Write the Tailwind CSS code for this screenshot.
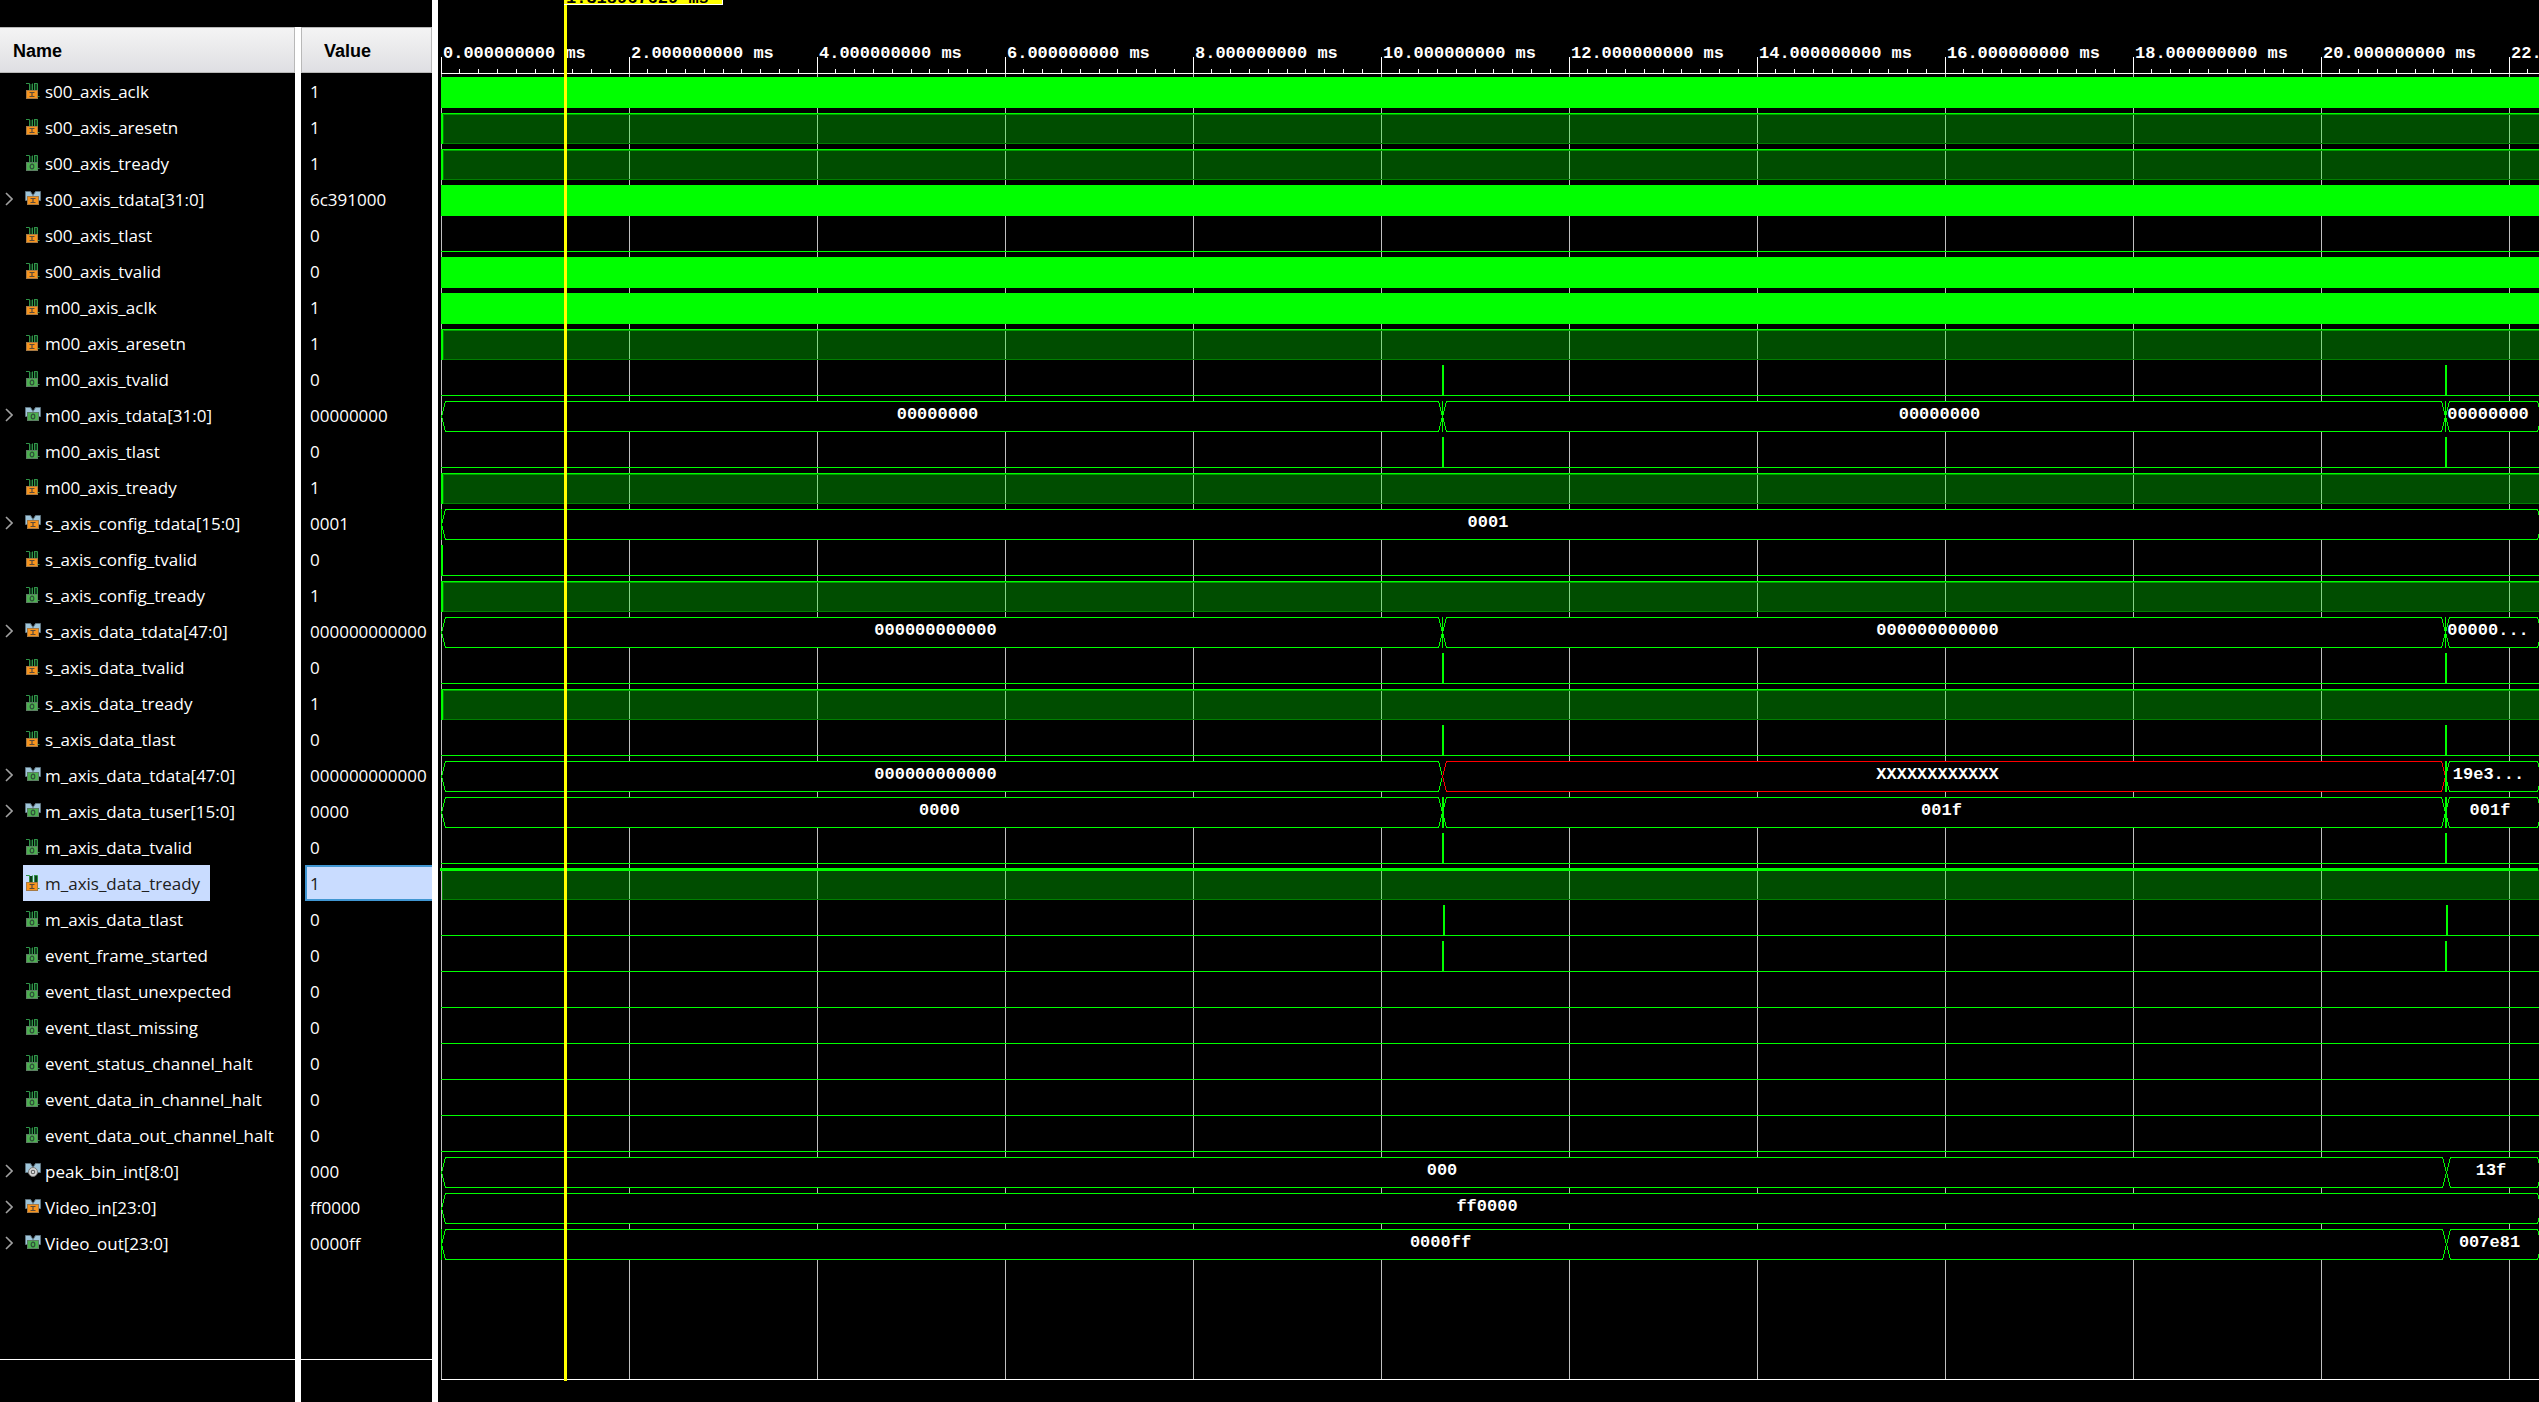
<!DOCTYPE html>
<html lang="en">
<head>
<meta charset="utf-8">
<title>Waveform viewer</title>
<script src="https://cdn.jsdelivr.net/npm/@tailwindcss/browser@4"></script>
</head>
<body class="bg-black text-white">

<svg class="hidden" aria-hidden="true">
  <defs>
    <symbol id="wave" viewBox="0 0 16 16">
      <path d="M4 1V8H8V1Z M9 1H13V13H9Z" fill="#0f3d1c"/>
      <path d="M1 .5H4.5V8M7.5 8V.5M9 .5H12.5V13.5H14.5M9.5 .5V8" fill="none" stroke="#2f9348"/>
    </symbol>
    <symbol id="bus" viewBox="0 0 16 16">
      <path d="M.5 .5H5.5L8 4.5L10.5 .5H15.5V9.5H.5Z" fill="#9fc5da" stroke="#5f7480"/>
    </symbol>
    <symbol id="badge-in" viewBox="0 0 12 9">
      <rect x=".5" y=".5" width="11" height="8" fill="#f7941d" stroke="#a67a45"/>
      <path d="M3.5 2.5H8.5M3.5 6.5H8.5M6 2.5V6.5" stroke="#5a4a3a" stroke-width="1.2" fill="none"/>
    </symbol>
    <symbol id="badge-out" viewBox="0 0 12 9">
      <rect x=".5" y=".5" width="11" height="8" fill="#4caf50" stroke="#5c7f63"/>
      <ellipse cx="6" cy="4.5" rx="1.8" ry="2.4" stroke="#30503a" stroke-width="1.2" fill="none"/>
    </symbol>
    <symbol id="badge-int" viewBox="0 0 12 12">
      <circle cx="6" cy="6" r="4.5" fill="#d4d4d4" stroke="#777"/>
      <circle cx="6" cy="6" r="1.7" fill="#f4f4f4" stroke="#666" stroke-width="1.2"/>
    </symbol>
  </defs>
</svg>

<main class="flex h-screen overflow-hidden">
  <!-- Signal names and values -->
  <section class="flex w-[438px] shrink-0 flex-col border-r-6 border-white pt-[27px]">
    <table class="w-full table-fixed border-separate border-spacing-0 font-['Open_Sans',sans-serif] text-[17px] leading-[34px]">
      <thead class="font-['Liberation_Sans',sans-serif] text-lg text-black">
        <tr>
          <th scope="col" class="w-[301px] border-r-6 border-white p-0 text-left font-bold">
            <div class="flex h-[46px] items-center border-y border-r border-[#b8b8b8] bg-linear-to-b from-[#f4f4f4] to-[#dfdfe3] pt-0.5 pl-[13px]">Name</div>
          </th>
          <th scope="col" class="p-0 text-left font-bold">
            <div class="flex h-[46px] items-center border border-[#b8b8b8] bg-linear-to-b from-[#f4f4f4] to-[#dfdfe3] pt-0.5 pl-[22px]">Value</div>
          </th>
        </tr>
      </thead>
      <tbody id="signals"></tbody>
    </table>
    <div class="flex min-h-0 flex-1">
      <div class="w-[301px] border-r-6 border-white"><div class="h-[99px] border-b border-white"></div></div>
      <div class="flex-1"><div class="h-[99px] border-b border-white"></div></div>
    </div>
  </section>

  <!-- Waveforms -->
  <section class="relative min-w-0 flex-1 overflow-hidden pl-[3px] font-['Liberation_Mono',monospace] text-[17px] leading-5 font-bold">
    <div class="relative h-[73px]">
      <div id="ruler" class="flex pt-11"></div>
      <svg id="ticks" class="absolute bottom-0 left-0 h-4 w-full overflow-hidden" fill="#fff" shape-rendering="crispEdges"></svg>
    </div>
    <div class="relative h-[1307px] border-y border-white">
      <svg id="grid" class="absolute inset-0 h-full w-full" fill="#c0c0c0" shape-rendering="crispEdges"></svg>
      <div id="waves" class="relative -mt-px"></div>
    </div>
    <div class="absolute top-0 left-[126px] h-[1381px] w-[3px] bg-[#ffff00]"></div>
    <div class="absolute top-0 left-[126px] h-[5px] w-[159px] overflow-hidden border-r border-b border-white bg-[#ffff00] pl-0.5 text-black"><div class="-mt-[11px]">1.318967629 ms</div></div>
  </section>
</main>

<script>
const END = 2100;          // right end of the simulated range, px from 0 ms
const A = 1001, B = 2004;  // frame events
const seg = (to, text, o = {}) => ({ to, text, ...o });

// [name, direction, value, wave, options]
const signals = [
  ['s00_axis_aclk', 'in', '1', 'busy'],
  ['s00_axis_aresetn', 'in', '1', 'high'],
  ['s00_axis_tready', 'out', '1', 'high'],
  ['s00_axis_tdata[31:0]', 'in', '6c391000', 'busy'],
  ['s00_axis_tlast', 'in', '0', 'low'],
  ['s00_axis_tvalid', 'in', '0', 'busy'],
  ['m00_axis_aclk', 'in', '1', 'busy'],
  ['m00_axis_aresetn', 'in', '1', 'high'],
  ['m00_axis_tvalid', 'out', '0', 'low', { spikes: [A, B] }],
  ['m00_axis_tdata[31:0]', 'out', '00000000', 'bus', { segs: [seg(A, '00000000', { bar: 1 }), seg(B, '00000000', { bar: 1 }), seg(END, '00000000')] }],
  ['m00_axis_tlast', 'out', '0', 'low', { spikes: [A, B] }],
  ['m00_axis_tready', 'in', '1', 'high'],
  ['s_axis_config_tdata[15:0]', 'in', '0001', 'bus', { start: 1, segs: [seg(END, '0001')] }],
  ['s_axis_config_tvalid', 'in', '0', 'low', { spikes: [0] }],
  ['s_axis_config_tready', 'out', '1', 'high'],
  ['s_axis_data_tdata[47:0]', 'in', '000000000000', 'bus', { segs: [seg(A, '000000000000', { bar: 1 }), seg(B, '000000000000', { bar: 1 }), seg(END, '00000...')] }],
  ['s_axis_data_tvalid', 'in', '0', 'low', { spikes: [A, B] }],
  ['s_axis_data_tready', 'out', '1', 'high'],
  ['s_axis_data_tlast', 'in', '0', 'low', { spikes: [A, B] }],
  ['m_axis_data_tdata[47:0]', 'out', '000000000000', 'bus', { segs: [seg(A, '000000000000'), seg(B, 'XXXXXXXXXXXX', { red: true, bar: 2 }), seg(END, '19e3...')] }],
  ['m_axis_data_tuser[15:0]', 'out', '0000', 'bus', { segs: [seg(A, '0000', { bar: 2 }), seg(B, '001f', { bar: 2 }), seg(END, '001f')] }],
  ['m_axis_data_tvalid', 'out', '0', 'low', { spikes: [A, B] }],
  ['m_axis_data_tready', 'in', '1', 'selected'],
  ['m_axis_data_tlast', 'out', '0', 'low', { spikes: [A + 1, B + 1] }],
  ['event_frame_started', 'out', '0', 'low', { spikes: [A, B] }],
  ['event_tlast_unexpected', 'out', '0', 'low'],
  ['event_tlast_missing', 'out', '0', 'low'],
  ['event_status_channel_halt', 'out', '0', 'low'],
  ['event_data_in_channel_halt', 'out', '0', 'low'],
  ['event_data_out_channel_halt', 'out', '0', 'low'],
  ['peak_bin_int[8:0]', 'int', '000', 'bus', { segs: [seg(B + 1, '000'), seg(END, '13f')] }],
  ['Video_in[23:0]', 'in', 'ff0000', 'bus', { segs: [seg(END, 'ff0000')] }],
  ['Video_out[23:0]', 'out', '0000ff', 'bus', { start: 1, segs: [seg(B + 1, '0000ff'), seg(END, '007e81')] }],
];

const rect = (x, y, w, h, fill = '#00ff00') => `<rect x="${x}" y="${y}" width="${w}" height="${h}" fill="${fill}"/>`;

function icon(dir, isBus) {
  if (dir === 'int') return `<svg class="h-4 w-4 shrink-0" aria-hidden="true"><use href="#bus" width="16" height="16"/><use href="#badge-int" x="2" y="3" width="12" height="12"/></svg>`;
  return isBus
    ? `<svg class="h-4 w-4 shrink-0" aria-hidden="true"><use href="#bus" width="16" height="16"/><use href="#badge-${dir}" x="2" y="5" width="12" height="9"/></svg>`
    : `<svg class="h-4 w-4 shrink-0" aria-hidden="true"><use href="#wave" width="16" height="16"/><use href="#badge-${dir}" x="1" y="7" width="12" height="9"/></svg>`;
}

function drawWave(kind, o = {}) {
  if (kind === 'busy') return rect(0, 4, '100%', 31);
  if (kind === 'low') return rect(0, 34, '100%', 1) + (o.spikes || []).map(x => rect(x, 4, 2, 31)).join('');
  if (kind === 'high' || kind === 'selected') {
    const base = rect(1, 4, '100%', 31, 'rgba(0,255,0,0.3)') + rect(1, 34, '100%', 1, '#008000') + rect(1, 5, '100%', 1, '#00a000');
    return kind === 'high'
      ? base + rect(2, 5, 1, 30, '#008000') + rect(0, 4, '100%', 1) + rect(0, 4, 2, 31)
      : base + rect(1, 5, 1, 30, '#008000') + rect(-1, 3, '100%', 3);
  }
  let x = 0, out = '';
  for (const s of o.segs) {
    const c = s.red ? '#ff0000' : '#00ff00';
    out += `<path d="M${x + .5} 19.5L${x + 4.5} 4.5H${s.to - 3.5}L${s.to + .5} 19.5L${s.to - 3.5} 34.5H${x + 4.5}Z" fill="#000" stroke="${c}"/>`;
    x = s.to;
  }
  for (const s of o.segs) if (s.bar) out += rect(s.to, 4, s.bar, 31);
  if (o.start) out += rect(0, 4, 1, 31);
  return out;
}

let rows = '', waves = '';
for (const [name, dir, value, kind, o] of signals) {
  const isBus = name.includes('['), sel = kind === 'selected';
  const chevron = isBus
    ? `<button type="button" aria-label="Expand ${name}" class="flex w-[23px] shrink-0 items-center pl-[5px]"><svg class="h-3.5 w-2" viewBox="0 0 8 14" fill="none" stroke="#a0a0a0" stroke-width="1.6"><path d="M1 1L7 7L1 13"/></svg></button>`
    : `<span class="w-[23px] shrink-0"></span>`;
  rows += `<tr><td class="border-r-6 border-white p-0"><div class="flex h-9">${chevron}<span class="${sel
    ? 'flex items-center gap-1 bg-[#c9dcff] pr-2.5 pl-0.5 text-[#202020]'
    : 'flex items-center gap-1 pl-0.5'}">${icon(dir, isBus)}<span class="pt-0.5">${name}</span></span></div></td>
    <td class="p-0"><div class="${sel
    ? 'ml-1 h-9 border-y-2 border-l-2 border-[#4096d2] bg-[#c9dcff] pl-[3px] text-[#202020]'
    : 'ml-1 h-9 overflow-hidden border-l-2 border-transparent pt-0.5 pl-[3px]'}">${value}</div></td></tr>`;

  let labels = '';
  if (kind === 'bus') {
    let x = 0;
    o.segs.forEach((s, i) => {
      // The last segment fills whatever part of it the window shows.
      const last = i === o.segs.length - 1;
      labels += last
        ? `<span class="flex min-w-0 flex-1 justify-center" style="padding-right:${s.text.length}px">${s.text}</span>`
        : `<span class="flex shrink-0 justify-center" style="width:${s.to - x}px;padding-right:${s.text.length}px">${s.text}</span>`;
      x = s.to;
    });
  }
  waves += `<div class="relative h-9"><svg class="absolute inset-0 h-9 w-full overflow-visible" shape-rendering="crispEdges" aria-hidden="true">${drawWave(kind, o)}</svg><div class="relative flex pt-2">${labels}</div></div>`;
}
document.getElementById('signals').innerHTML = rows;
document.getElementById('waves').innerHTML = waves;

let ruler = '', ticks = '', grid = '';
for (let i = 0; i < 12; i++) {
  const x = i * 188;
  ruler += `<span class="w-[188px] shrink-0 pl-0.5 whitespace-pre">${i * 2}.000000000 ms</span>`;
  ticks += rect(x, 0, 1, 16, '#fff');
  for (let k = 1; k < 10; k++) ticks += rect(x + Math.floor(k * 18.8), 12, 1, 4, '#fff');
  grid += `<rect x="${x}" y="0" width="1" height="100%"/>`;
}
document.getElementById('ruler').innerHTML = ruler;
document.getElementById('ticks').innerHTML = ticks;
document.getElementById('grid').innerHTML = grid;
</script>
</body>
</html>
